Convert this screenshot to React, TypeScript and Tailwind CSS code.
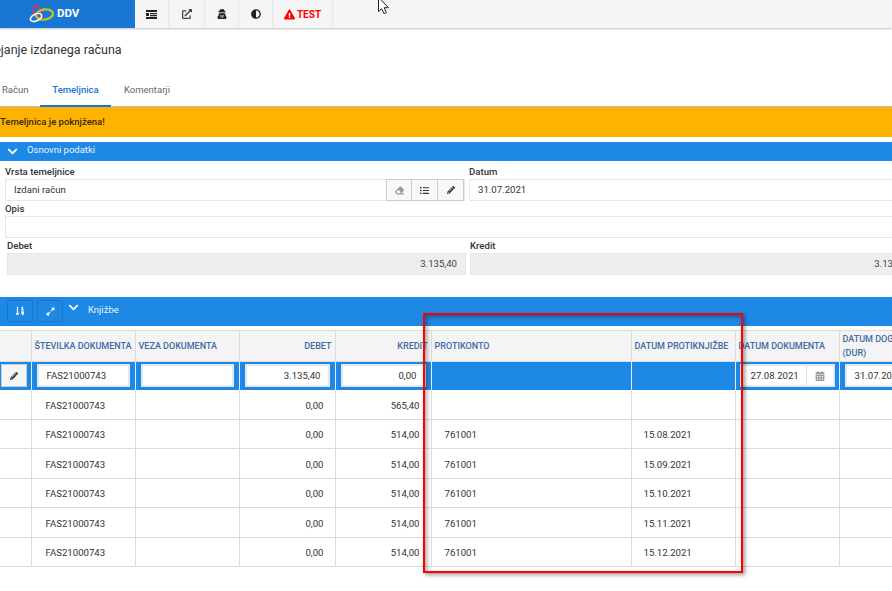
import React from "react";
import {
  FaAdjust,
  FaCalendarAlt,
  FaChevronDown,
  FaEraser,
  FaExclamationTriangle,
  FaExpandAlt,
  FaExternalLinkAlt,
  FaListUl,
  FaPencilAlt,
  FaSortNumericDown,
  FaUserSecret,
} from "react-icons/fa";

interface Row {
  doc: string;
  debet: string;
  kredit: string;
  konto: string;
  datum: string;
  height: string;
}

const rows: Row[] = [
  { doc: "FAS21000743", debet: "0,00", kredit: "565,40", konto: "", datum: "", height: "h-[30px]" },
  { doc: "FAS21000743", debet: "0,00", kredit: "514,00", konto: "761001", datum: "15.08.2021", height: "h-[29px]" },
  { doc: "FAS21000743", debet: "0,00", kredit: "514,00", konto: "761001", datum: "15.09.2021", height: "h-[30px]" },
  { doc: "FAS21000743", debet: "0,00", kredit: "514,00", konto: "761001", datum: "15.10.2021", height: "h-[29px]" },
  { doc: "FAS21000743", debet: "0,00", kredit: "514,00", konto: "761001", datum: "15.11.2021", height: "h-[30px]" },
  { doc: "FAS21000743", debet: "0,00", kredit: "514,00", konto: "761001", datum: "15.12.2021", height: "h-[29px]" },
];

const th = "border-r border-[#dcdcdc] px-[3px] text-left text-[9px] font-medium uppercase leading-[14px] text-[#3f6aa8] whitespace-nowrap";
const td = "border-r border-[#dcdcdc] pt-[3px] text-[9.6px] text-[#333]";
const cellInput = "flex h-[23px] items-center border-2 border-[#e3e8ee] bg-white text-[9.6px] text-[#333]";

function Logo() {
  return (
    <svg width="26" height="18" viewBox="0 0 26 18" fill="none">
      <ellipse cx="8" cy="6.5" rx="3.6" ry="6" stroke="#d6336c" strokeWidth="1.8" transform="rotate(-12 8 6.5)" />
      <ellipse cx="15.5" cy="9.5" rx="8.5" ry="5" stroke="#b5c334" strokeWidth="2.4" transform="rotate(-8 15.5 9.5)" />
      <ellipse cx="7" cy="12.5" rx="6" ry="3.4" stroke="#ffffff" strokeWidth="1.6" transform="rotate(-25 7 12.5)" />
    </svg>
  );
}

function CardIcon() {
  return (
    <svg width="11" height="9" viewBox="0 0 11 9" fill="#222">
      <path d="M0 0h11v2H0zM4 3h7v1.2H4zM4 5h7v1.2H4zM0 7h11v2H0zM0 3h3v3H0z" />
    </svg>
  );
}

function Cursor() {
  return (
    <svg width="14" height="16" viewBox="0 0 14 16" fill="#fff" stroke="#222" strokeWidth="1">
      <path d="M1.5 -3v14.5l3.2-2.8 2.3 5 2.4-1.1-2.2-4.9h4.2z" />
    </svg>
  );
}

function ToolItem({ width, children }: { width: string; children: React.ReactNode }) {
  return <div className={`flex h-full items-center justify-center border-r border-[#e8e8e8] ${width}`}>{children}</div>;
}

function Label({ children, className }: { children: React.ReactNode; className?: string }) {
  return <div className={`h-[16px] text-[9.6px] font-medium leading-[18px] text-[#333] ${className ?? ""}`}>{children}</div>;
}

export default function App() {
  return (
    <div className="relative h-[591px] w-[892px] overflow-hidden bg-white font-['Roboto',sans-serif]">
      <div className="flex h-[28px] bg-[#f5f5f5] shadow-[0_1px_2px_rgba(0,0,0,0.25)]">
        <div className="flex w-[135px] items-center gap-[2px] bg-[#1976d2] pl-[29px]">
          <Logo />
          <span className="text-[11.5px] font-bold text-white">DDV</span>
        </div>
        <ToolItem width="w-[34px]"><CardIcon /></ToolItem>
        <ToolItem width="w-[36px]"><FaExternalLinkAlt className="text-[10px] text-[#444]" /></ToolItem>
        <ToolItem width="w-[34px]"><FaUserSecret className="text-[10px] text-[#222]" /></ToolItem>
        <ToolItem width="w-[34px]"><FaAdjust className="text-[10px] text-[#222]" /></ToolItem>
        <ToolItem width="w-[60px]">
          <span className="flex items-center gap-[2px] text-[10px] font-bold text-[#f00]">
            <FaExclamationTriangle className="text-[11px]" />
            TEST
          </span>
        </ToolItem>
      </div>

      <div className="h-[50px] pt-[14px] text-[12.5px] leading-[16px] text-[#333]">
        <div className="-ml-[18px] whitespace-nowrap">Urejanje izdanega računa</div>
      </div>

      <div className="flex h-[29px] border-b border-[#bdbdbd] text-[9.5px]">
        <div className="flex w-[40px] items-center pb-[4px] pl-[2px] text-[#666]">Račun</div>
        <div className="-mb-[1px] flex w-[71px] items-center justify-center border-b-2 border-[#1976d2] pb-[2px] font-medium text-[#1976d2]">Temeljnica</div>
        <div className="flex items-center pb-[4px] pl-[13px] text-[#666]">Komentarji</div>
      </div>

      <div className="flex h-[30px] items-center bg-[#ffb300] text-[9.5px] font-medium text-[#3a2a10]">
        <span className="pt-[1px]">Temeljnica je poknjžena!</span>
      </div>

      <div className="mt-[5px] flex h-[19px] items-center gap-[9px] bg-[#1e88e5] pl-[7px] text-[9.5px] text-[#e8f3fd]">
        <FaChevronDown className="text-[11px] text-white" />
        <span className="pb-[2px]">Osnovni podatki</span>
      </div>

      <div className="flex gap-[4px] pt-[2px]">
        <div className="w-[465px] shrink-0 pl-[5px]">
          <Label>Vrsta temeljnice</Label>
          <div className="flex h-[22px] border border-[#e3e8ee]">
            <div className="flex flex-1 items-center pl-[8px] text-[9.6px] text-[#333]">Izdani račun</div>
            <div className="flex h-[22px] w-[26px] items-center justify-center border border-[#ccc] bg-[#f8f8f8] -mt-[1px]"><FaEraser className="text-[9px] text-[#999]" /></div>
            <div className="flex h-[22px] w-[26px] items-center justify-center border border-l-0 border-[#ccc] bg-[#f8f8f8] -mt-[1px]"><FaListUl className="text-[9px] text-[#333]" /></div>
            <div className="flex h-[22px] w-[26px] items-center justify-center border border-l-0 border-[#ccc] bg-[#f8f8f8] -mt-[1px]"><FaPencilAlt className="text-[8px] text-[#333]" /></div>
          </div>
        </div>
        <div className="w-[500px] shrink-0">
          <Label>Datum</Label>
          <div className="flex h-[22px] items-center border border-[#e3e8ee] pl-[8px] text-[9.6px] text-[#333]">31.07.2021</div>
        </div>
      </div>

      <div className="w-[960px] pl-[5px]">
        <Label className="-mt-[1px]">Opis</Label>
        <div className="h-[22px] border border-[#e3e8ee]" />
      </div>

      <div className="flex gap-[4px] pl-[7px]">
        <div className="w-[459px] shrink-0">
          <Label className="-mt-[1px]">Debet</Label>
          <div className="flex h-[22px] items-center justify-end border border-[#e3e8ee] bg-[#eeeeee] pr-[8px] text-[9.6px] text-[#444]">3.135,40</div>
        </div>
        <div className="w-[450px] shrink-0">
          <Label className="-mt-[1px]">Kredit</Label>
          <div className="flex h-[22px] items-center justify-end border border-[#e3e8ee] bg-[#eeeeee] pr-[8px] text-[9.6px] text-[#444]">3.135,40</div>
        </div>
      </div>

      <div className="mt-[22px] flex h-[29px] gap-[4px] bg-[#1e88e5] pl-[7px] pt-[3px] text-[9.5px] text-[#e8f3fd]">
        <button className="flex h-[22px] w-[26px] items-center justify-center rounded-[2px] border border-[#1a78cc]"><FaSortNumericDown className="text-[10px] text-white" /></button>
        <button className="flex h-[22px] w-[26px] items-center justify-center rounded-[2px] border border-[#1a78cc]"><FaExpandAlt className="text-[9px] text-white" /></button>
        <FaChevronDown className="ml-[1px] mt-[2px] text-[11px] text-white" />
        <span className="ml-[5px] mt-[3px]">Knjižbe</span>
      </div>

      <table className="mt-[4px] w-[960px] table-fixed border-collapse">
        <colgroup>
          <col className="w-[31px]" />
          <col className="w-[104px]" />
          <col className="w-[104px]" />
          <col className="w-[96px]" />
          <col className="w-[96px]" />
          <col className="w-[200px]" />
          <col className="w-[104px]" />
          <col className="w-[104px]" />
          <col className="w-[121px]" />
        </colgroup>
        <thead>
          <tr className="h-[31px] border-y border-[#dcdcdc] bg-[#f4f4f4]">
            <th className={th} />
            <th className={th}>Številka dokumenta</th>
            <th className={th}>Veza dokumenta</th>
            <th className={`${th} !text-right`}>Debet</th>
            <th className={`${th} !text-right`}>Kredit</th>
            <th className={th}>Protikonto</th>
            <th className={th}>Datum protiknjižbe</th>
            <th className={th}>Datum dokumenta</th>
            <th className={th}>Datum dogodka<br />(DUR)</th>
          </tr>
        </thead>
        <tbody>
          <tr className="h-[28px] bg-[#1e88e5]">
            <td className="border-r border-[#e3eefa]">
              <div className="ml-[1px] flex h-[23px] w-[26px] items-center justify-center border border-[#ccc] bg-[#f5f5f5]"><FaPencilAlt className="text-[8px] text-[#333]" /></div>
            </td>
            <td className="border-r border-[#e3eefa] px-[5px]"><div className={`${cellInput} pl-[8px]`}>FAS21000743</div></td>
            <td className="border-r border-[#e3eefa] px-[5px]"><div className={cellInput} /></td>
            <td className="border-r border-[#e3eefa] px-[5px]"><div className={`${cellInput} justify-end pr-[7px]`}>3.135,40</div></td>
            <td className="border-r border-[#e3eefa] px-[5px]"><div className={`${cellInput} justify-end pr-[7px]`}>0,00</div></td>
            <td className="border-r border-[#e3eefa]" />
            <td className="border-r border-[#e3eefa]" />
            <td className="border-r border-[#e3eefa] px-[4px]">
              <div className={`${cellInput} justify-between pl-[9px]`}>
                27.08.2021
                <span className="flex h-full w-[27px] items-center justify-center border-l border-[#ddd] bg-white"><FaCalendarAlt className="text-[10px] text-[#999]" /></span>
              </div>
            </td>
            <td className="px-[5px]"><div className={`${cellInput} pl-[8px]`}>31.07.2021</div></td>
          </tr>
          {rows.map((r) => (
            <tr key={r.datum || "first"} className={`${r.height} border-b border-[#dcdcdc]`}>
              <td className={td} />
              <td className={`${td} pl-[14px]`}>{r.doc}</td>
              <td className={td} />
              <td className={`${td} pr-[11px] text-right`}>{r.debet}</td>
              <td className={`${td} pr-[11px] text-right`}>{r.kredit}</td>
              <td className={`${td} pl-[13px]`}>{r.konto}</td>
              <td className={`${td} pl-[12px]`}>{r.datum}</td>
              <td className={td} />
              <td className={td} />
            </tr>
          ))}
        </tbody>
      </table>

      <div className="pointer-events-none absolute left-[423px] top-[313px] h-[260px] w-[320px] border-[2.5px] border-[#f00] shadow-[2px_2px_4px_rgba(0,0,0,0.4),inset_2px_2px_4px_rgba(0,0,0,0.35)]" />
      <div className="absolute left-[377px] top-0"><Cursor /></div>
    </div>
  );
}
